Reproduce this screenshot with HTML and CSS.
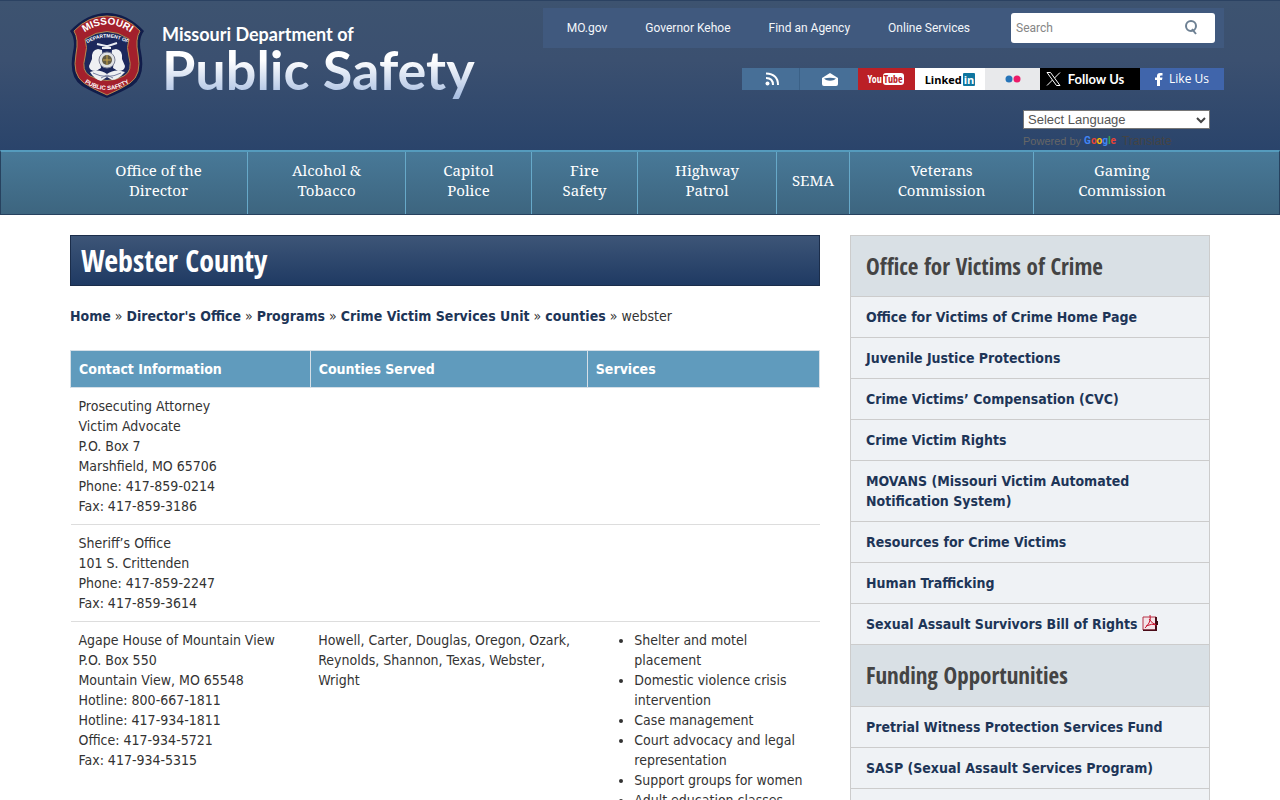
FILE: index.html
```html
<!DOCTYPE html>
<html lang="en">
<head>
<meta charset="utf-8">
<title>Webster County</title>
<link rel="stylesheet" href="styles.css">
</head>
<body>
<header class="site-header">
  <div class="container header-inner">
    <a class="brand" href="#">
      <svg class="seal" width="76" height="88" viewBox="0 0 76 88" aria-hidden="true">
        <path d="M1 19Q18 1 38 1T75 19Q69 27 72 40Q77 65 63 74Q53 80 38 86Q23 80 13 74Q-1 65 4 40Q7 27 1 19Z" fill="#111d4a"/>
        <path d="M5 19Q19 4 38 4T71 19Q66 27 69 42Q73 63 61 71Q52 77 38 83Q24 77 15 71Q3 63 7 42Q10 27 5 19Z" fill="#a3202c" stroke="#b58a50" stroke-width="1"/>
        <path d="M16 27Q38 12 60 27Q57 35 60 45Q64 59 55 64Q38 73 21 64Q12 59 16 45Q19 35 16 27Z" fill="#1c285c" stroke="#b58a50" stroke-width="1"/>
        <path id="arc-top" d="M11 24Q38 1 66 24" fill="none"/>
        <path id="arc-mid" d="M17 32Q38 19 60 32" fill="none"/>
        <path id="arc-low" d="M11 67Q38 89 65 67" fill="none"/>
        <text class="seal-text seal-large"><textPath href="#arc-top" startOffset="50%">MISSOURI</textPath></text>
        <text class="seal-text seal-small"><textPath href="#arc-mid" startOffset="50%">DEPARTMENT OF</textPath></text>
        <text class="seal-text seal-medium"><textPath href="#arc-low" startOffset="50%">PUBLIC SAFETY</textPath></text>
        <path d="M28 32L37 34L39 34L48 31M33 36H42" stroke="#e9ecf2" stroke-width="2" fill="none"/>
        <path d="M29 37Q22 38 23 47L20 54Q20 59 27 59L32 56L31 48Q34 43 33 38ZM47 37Q54 38 53 47L56 54Q56 59 49 59L44 56L45 48Q42 43 43 38Z" fill="#eef0f3"/>
        <path d="M21 60Q30 56 38 62Q46 56 56 60Q49 68 43 68L38 65L32 69Q25 67 21 60Z" fill="#eef0f3"/>
        <path d="M24 61Q38 68 52 61M32 66L38 63L44 66" stroke="#7881a2" fill="none"/>
        <circle cx="38" cy="48" r="8" fill="#dfe1e3" stroke="#7a7f94"/>
        <circle cx="38" cy="48" r="5" fill="#625b42"/>
        <path d="M38 43V53M34 48H42" stroke="#c9a64d"/>
      </svg>
      <span class="brand-text">
        <span class="brand-small">Missouri Department of</span>
        <span class="brand-large">Public Safety</span>
      </span>
    </a>
    <div class="tools">
      <div class="utility">
        <nav class="utility-links" aria-label="State">
          <a href="#">MO.gov</a>
          <a href="#">Governor Kehoe</a>
          <a href="#">Find an Agency</a>
          <a href="#">Online Services</a>
        </nav>
        <form class="search">
          <input type="text" placeholder="Search" aria-label="Search">
          <button type="button" aria-label="Submit search">
            <svg width="16" height="18" viewBox="0 0 16 18" fill="none" stroke="#6d8093" stroke-width="2"><circle cx="7" cy="8" r="5"/><path d="M8 11L12 16"/></svg>
          </button>
        </form>
      </div>
      <div class="social">
        <a class="rss" href="#" aria-label="RSS">
          <svg width="15" height="14" viewBox="0 0 15 14" fill="none" stroke="#fff" stroke-width="2"><circle cx="2.500" cy="11.500" r="2" fill="#fff" stroke="none"/><path d="M1 6Q8 6 8 13M1 1.500Q13 2 13 13"/></svg>
        </a>
        <a class="mail" href="#" aria-label="Email">
          <svg width="16" height="13" viewBox="0 0 16 13"><path d="M0 5L8 0L16 5V11Q16 13 14 13H2Q0 13 0 11Z" fill="#fff"/><path d="M2 5.500Q8 4 14 5.500L12 7Q8 8.500 4 7Z" fill="#476f97"/></svg>
        </a>
        <a class="youtube" href="#"><span>You</span><span class="tube">Tube</span></a>
        <a class="linkedin" href="#"><span>Linked</span><span class="in">in</span></a>
        <a class="flickr" href="#" aria-label="Flickr">
          <svg width="16" height="8" viewBox="0 0 16 8"><circle cx="4" cy="4" r="3.500" fill="#2674b8"/><circle cx="12" cy="4" r="3.500" fill="#ec1b69"/></svg>
        </a>
        <a class="follow" href="#">
          <svg width="15" height="14" viewBox="0 0 15 14" fill="none" stroke="#fff"><path d="M1 .5H4.500L14 13.500H10.500ZM14 .5L8.500 6M6.500 8L1 13.500"/></svg>
          <span>Follow Us</span>
        </a>
        <a class="like" href="#">
          <svg width="8" height="13" viewBox="0 0 8 13" fill="#fff"><path d="M2 13V7H0V4.500H2V3Q2 0 5 0H7.500V2.500H6Q5 2.500 5 3.500V4.500H7.500L7 7H5V13Z"/></svg>
          <span>Like Us</span>
        </a>
      </div>
      <div class="translate">
        <select aria-label="Select Language"><option>Select Language</option></select>
        <svg class="chevron" width="10" height="7" viewBox="0 0 10 7" fill="none" stroke="#444" stroke-width="2"><path d="M1 1L5 5L9 1"/></svg>
        <div class="powered"><span>Powered by</span><span class="google"><i class="g-blue">G</i><i class="g-red">o</i><i class="g-yellow">o</i><i class="g-blue">g</i><i class="g-green">l</i><i class="g-red">e</i></span><span class="translate-word">Translate</span></div>
      </div>
    </div>
  </div>
</header>
<nav class="main-nav" aria-label="Main">
  <div class="container nav-inner">
    <a class="w-director" href="#">Office of the<br>Director</a>
    <a class="w-alcohol" href="#">Alcohol &amp;<br>Tobacco</a>
    <a class="w-capitol" href="#">Capitol<br>Police</a>
    <a class="w-fire" href="#">Fire<br>Safety</a>
    <a class="w-highway" href="#">Highway<br>Patrol</a>
    <a class="w-sema" href="#">SEMA</a>
    <a class="w-veterans" href="#">Veterans<br>Commission</a>
    <a class="w-gaming" href="#">Gaming<br>Commission</a>
  </div>
</nav>
<div class="container page">
  <main class="content">
    <h1>Webster County</h1>
    <p class="crumbs"><a href="#">Home</a> » <a href="#">Director's Office</a> » <a href="#">Programs</a> » <a href="#">Crime Victim Services Unit</a> » <a href="#">counties</a> » webster</p>
    <table class="listing">
      <thead><tr><th class="col-contact">Contact Information</th><th class="col-counties">Counties Served</th><th>Services</th></tr></thead>
      <tbody>
        <tr><td>Prosecuting Attorney<br>Victim Advocate<br>P.O. Box 7<br>Marshfield, MO 65706<br>Phone: 417-859-0214<br>Fax: 417-859-3186</td><td></td><td></td></tr>
        <tr><td>Sheriff’s Office<br>101 S. Crittenden<br>Phone: 417-859-2247<br>Fax: 417-859-3614</td><td></td><td></td></tr>
        <tr>
          <td>Agape House of Mountain View<br>P.O. Box 550<br>Mountain View, MO 65548<br>Hotline: 800-667-1811<br>Hotline: 417-934-1811<br>Office: 417-934-5721<br>Fax: 417-934-5315</td>
          <td>Howell, Carter, Douglas, Oregon, Ozark, Reynolds, Shannon, Texas, Webster, Wright</td>
          <td><ul><li>Shelter and motel placement</li><li>Domestic violence crisis intervention</li><li>Case management</li><li>Court advocacy and legal representation</li><li>Support groups for women</li><li>Adult education classes</li></ul></td>
        </tr>
      </tbody>
    </table>
  </main>
  <aside class="sidebar">
    <h2>Office for Victims of Crime</h2>
    <ul>
      <li><a href="#">Office for Victims of Crime Home Page</a></li>
      <li><a href="#">Juvenile Justice Protections</a></li>
      <li><a href="#">Crime Victims’ Compensation (CVC)</a></li>
      <li><a href="#">Crime Victim Rights</a></li>
      <li><a href="#">MOVANS (Missouri Victim Automated Notification System)</a></li>
      <li><a href="#">Resources for Crime Victims</a></li>
      <li><a href="#">Human Trafficking</a></li>
      <li><a class="pdf" href="#">Sexual Assault Survivors Bill of Rights
        <svg width="16" height="16" viewBox="0 0 16 16" aria-hidden="true"><path d="M1 2H14V15H1Z" fill="#f4e4e8" stroke="#b53246"/><path d="M14 2V15.500H1" fill="none" stroke="#4a0c18" stroke-width="2"/><path d="M8 0Q9 5 7 8T3 13M7 4Q10 9 15 10Q10 8 4 11" fill="none" stroke="#c8142e"/><path d="M14 6H16V10H14Z" fill="#3a0a12"/></svg></a></li>
    </ul>
    <h2>Funding Opportunities</h2>
    <ul>
      <li><a href="#">Pretrial Witness Protection Services Fund</a></li>
      <li><a href="#">SASP (Sexual Assault Services Program)</a></li>
      <li></li>
    </ul>
  </aside>
</div>
</body>
</html>
```
FILE: styles.css
```css
* { box-sizing: border-box; }
body {
  margin: 0;
  background: #fff;
  color: #333;
  font: 14px/20px Tahoma, "DejaVu Sans Condensed", sans-serif;
}
a { color: #1d3557; text-decoration: none; }
.container { max-width: 1140px; margin: 0 auto; }

.site-header {
  background: linear-gradient(#3d5370 0, #3b5070 40%, #2a446b 100%);
  border-top: 1px solid #2b4262;
}
.header-inner { display: flex; justify-content: space-between; min-height: 149px; }
.brand { display: flex; align-items: flex-start; gap: 17px; padding-top: 11px; color: #fff; }
.seal { flex: none; margin-left: -1px; }
.seal-text { fill: #fff; font-family: "Liberation Sans", sans-serif; font-weight: bold; text-anchor: middle; }
.seal-large { font-size: 10px; }
.seal-medium { font-size: 6px; }
.seal-small { font-size: 5px; }
.brand-text { display: flex; flex-direction: column; padding-top: 10px; font-family: Lato, sans-serif; font-weight: bold; }
.brand-small { font-size: 18px; line-height: 24px; }
.brand-large {
  font-size: 54px;
  line-height: 48px;
  padding-bottom: 8px;
  white-space: nowrap;
  color: transparent;
  background: linear-gradient(#fff 25%, #a9bfe2 90%);
  background-clip: text;
}
.tools { display: flex; flex-direction: column; align-items: flex-end; margin-right: -14px; padding-top: 7px; }
.utility { display: flex; align-items: center; gap: 41px; height: 40px; padding: 0 9px 0 24px; background: #40597e; }
.utility-links { display: flex; gap: 38px; }
.utility-links a { color: #f3f6fa; font: 12px/20px Roboto, sans-serif; white-space: nowrap; }
.search { display: flex; width: 204px; height: 30px; background: #fff; border-radius: 3px; }
.search input { flex: 1; min-width: 0; border: 0; background: none; padding: 0 5px; font: 12px/20px Roboto, sans-serif; }
.search input::placeholder { color: #858585; }
.search button { width: 46px; border: 0; background: none; padding: 0; }
.social { display: flex; height: 22px; margin-top: 20px; }
.social a { display: flex; align-items: center; justify-content: center; }
.social .rss { width: 58px; padding-left: 4px; background: #476f97; border-right: 1px solid #3b6187; }
.social .mail { width: 58px; padding-left: 2px; background: #476f97; }
.social .youtube { width: 57px; gap: 1px; padding-right: 2px; background: #bb2026; color: #fff; font: bold 10px/12px "Open Sans Condensed", "Liberation Sans Narrow", sans-serif; }
.tube { padding: 0 1px; border-radius: 3px; background: #fff; color: #bb2026; }
.social .linkedin { width: 70px; gap: 1px; background: #fff; color: #000; font: bold 11px/13px "Open Sans", sans-serif; }
.in { padding: 0 1px; background: #0e76a0; color: #fff; border-radius: 1px; }
.social .flickr { width: 55px; background: #e8e9eb; }
.social .follow { width: 100px; gap: 7px; padding-right: 10px; background: #000; color: #fff; font: bold 13px/20px Lato, sans-serif; }
.social .like { width: 84px; gap: 6px; background: #4065ab; color: #fff; font: 12px/20px "Open Sans", sans-serif; }
.translate { position: relative; width: 187px; margin: 20px 14px 0 0; }
.translate select {
  display: block;
  width: 100%;
  height: 19px;
  padding: 0 4px;
  border: 1px solid #767676;
  border-radius: 0;
  appearance: none;
  background: #fff;
  color: #555;
  font: 13px/16px "Liberation Sans", Arial, sans-serif;
}
.chevron { position: absolute; right: 4px; top: 7px; pointer-events: none; }
.powered { display: flex; gap: 3px; padding-top: 4px; color: #666; font: 11px/16px "Liberation Sans", Arial, sans-serif; }
.google { font-family: Roboto, sans-serif; font-weight: bold; font-size: 10px; }
.google i { font-style: normal; }
.g-blue { color: #4285f4; }
.g-red { color: #ea4335; }
.g-yellow { color: #fbbc05; }
.g-green { color: #34a853; }
.translate-word { padding-left: 3px; color: #444; font-size: 12px; }

.main-nav {
  background: linear-gradient(#487998, #3d657f);
  border: 1px solid #27425f;
  border-top: 2px solid #559bbd;
}
.nav-inner { display: flex; min-height: 62px; }
.nav-inner a {
  display: flex;
  align-items: center;
  justify-content: center;
  padding-bottom: 6px;
  border-right: 1px solid #67a9c9;
  color: #fff;
  font: 15px/20px "Droid Serif", "Noto Serif", "DejaVu Serif Condensed", serif;
  text-align: center;
}
.nav-inner a:last-child { border-right: 0; }
.w-director { flex: 177 1 0; }
.w-alcohol { flex: 157 1 0; }
.w-capitol { flex: 125 1 0; }
.w-fire { flex: 105 1 0; }
.w-highway { flex: 138 1 0; }
.w-sema { flex: 72 1 0; }
.w-veterans { flex: 183 1 0; }
.w-gaming { flex: 176 1 0; }

.page { display: grid; grid-template-columns: 25fr 12fr; align-items: start; gap: 30px; padding-top: 20px; }
h1, h2 { margin: 0; font-family: "Liberation Sans Narrow", "Open Sans Condensed", "Liberation Sans", sans-serif; font-weight: bold; }
h1 {
  padding: 10px;
  border: 1px solid #1b2d4a;
  background: linear-gradient(#3d5577, #1f3a63);
  color: #fff;
  font-size: 30px;
  line-height: 29px;
}
.crumbs { margin: 20px 0 24px; }
.crumbs a { font-weight: bold; }
.listing { width: 100%; border-collapse: collapse; table-layout: fixed; }
.listing th { padding: 8px; border: 1px solid #d5dfe7; background: #609bbd; color: #fff; text-align: left; }
.listing td { padding: 8px; border-bottom: 1px solid #ddd; vertical-align: top; }
.col-contact { width: 32%; }
.col-counties { width: 37%; }
.listing ul { margin: 0 0 10px; padding-left: 39px; }

.sidebar { border: 1px solid #ccc; border-bottom: 0; background: #eff2f5; }
.sidebar h2 { padding: 15px; border-bottom: 1px solid #ccc; background: #d9e0e5; color: #444; font-size: 23px; line-height: 30px; }
.sidebar ul { margin: 0; padding: 0; list-style: none; }
.sidebar ul + h2 { line-height: 31px; }
.sidebar li { min-height: 41px; padding: 10px 15px; border-bottom: 1px solid #ccc; font-weight: bold; }
.pdf svg { vertical-align: -2px; }
```
